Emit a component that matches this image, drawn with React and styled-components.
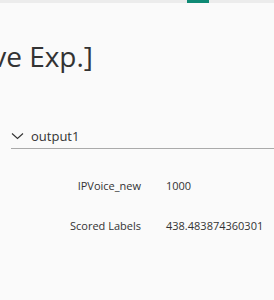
import React from 'react';
import styled, { createGlobalStyle } from 'styled-components';

const GlobalStyle = createGlobalStyle`
  html, body {
    margin: 0;
    padding: 0;
    background: #fafafa;
    font-family: "Open Sans", "Noto Sans", sans-serif;
    color: #333;
    overflow: hidden;
  }
`;

const Page = styled.div`
  width: 274px;
  height: 300px;
  overflow: hidden;
  background: #fafafa;
`;

const TopBar = styled.div`
  height: 3px;
  background: #ececec;
  display: flex;
`;

const ActiveTab = styled.div`
  margin-left: 187px;
  width: 22px;
  height: 3px;
  background: #0f8a75;
`;

const TitleWrap = styled.div`
  width: 93px;
  display: flex;
  justify-content: flex-end;
  overflow: hidden;
  margin-top: 36px;
`;

const Title = styled.h1`
  margin: 0;
  white-space: nowrap;
  font-size: 28px;
  font-weight: 400;
  line-height: 34px;
  color: #333;
`;

const Section = styled.div`
  margin: 50px 0 0 11px;
`;

const SectionHeader = styled.div`
  display: flex;
  align-items: center;
  gap: 7px;
  height: 25px;
  border-bottom: 1px solid #aaa;
  font-size: 13px;
  color: #333;
`;

const Rows = styled.div`
  display: grid;
  grid-template-columns: 130px auto;
  column-gap: 25px;
  row-gap: 24px;
  margin-top: 29px;
`;

const Label = styled.div`
  text-align: right;
  font-size: 11px;
  line-height: 16px;
`;

const Value = styled.div`
  font-size: 11px;
  line-height: 16px;
  white-space: nowrap;
`;

const Chevron = () => (
  <svg width="13" height="8" viewBox="0 0 13 8" fill="none">
    <path d="M1 1.5 L6.5 6.5 L12 1.5" stroke="#333" strokeWidth="1.1" />
  </svg>
);

export default function App() {
  return (
    <Page>
      <GlobalStyle />
      <TopBar>
        <ActiveTab />
      </TopBar>
      <TitleWrap>
        <Title>[Predictive Exp.]</Title>
      </TitleWrap>
      <Section>
        <SectionHeader>
          <Chevron />
          <span>output1</span>
        </SectionHeader>
        <Rows>
          <Label>IPVoice_new</Label>
          <Value>1000</Value>
          <Label>Scored Labels</Label>
          <Value>438.483874360301</Value>
        </Rows>
      </Section>
    </Page>
  );
}
